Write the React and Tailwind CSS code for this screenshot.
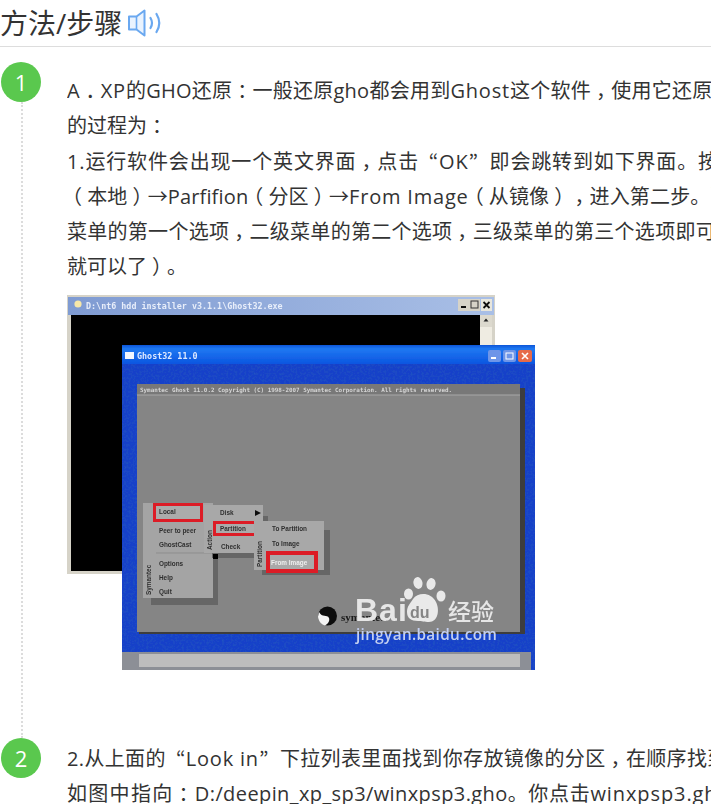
import React from "react";

function Speaker() {
  return (
    <svg width="36" height="28" viewBox="0 0 36 28" className="ml-[5px] mt-[9px] shrink-0" fill="none">
      <path d="M2 7.500h7.500L17.500 1.500v25L9.500 20.500H2z" fill="#eaf3fe" stroke="#6aa8f0" strokeWidth="2" strokeLinejoin="round" />
      <path d="M9.500 7.500v13" stroke="#6aa8f0" strokeWidth="1.600" />
      <path d="M23.500 9c1.800 3 1.800 7 0 10" stroke="#6aa8f0" strokeWidth="2.200" strokeLinecap="round" />
      <path d="M29.500 5c3.400 5.500 3.400 12.500 0 18" stroke="#6aa8f0" strokeWidth="2.200" strokeLinecap="round" />
    </svg>
  );
}

const menu = "font-['Liberation_Sans',sans-serif] text-[6.4px] font-bold fill-[#2f2f2f]";
const mono = "font-['DejaVu_Sans_Mono',monospace] font-bold";

function Shot() {
  return (
    <svg width="468" height="375" viewBox="67 295 468 375" className="block">
      <defs>
        <filter id="soft" x="-5%" y="-5%" width="110%" height="110%"><feGaussianBlur stdDeviation="0.6" /></filter>
        <filter id="softer" x="-5%" y="-5%" width="110%" height="110%"><feGaussianBlur stdDeviation="0.35" /></filter>
        <filter id="grain" x="0" y="0" width="100%" height="100%">
          <feTurbulence type="fractalNoise" baseFrequency="0.45" numOctaves="2" seed="4" result="n" />
          <feColorMatrix in="n" type="matrix" values="0 0 0 0 0.02  0 0 0 0 0.12  0 0 0 0 0.5  0 0 0 1.2 -0.5" />
        </filter>
        <linearGradient id="oldbar" x1="0" x2="1" y1="0" y2="0">
          <stop offset="0" stopColor="#7f9bd2" />
          <stop offset="1" stopColor="#a9bfe6" />
        </linearGradient>
        <linearGradient id="xpbar" x1="0" x2="0" y1="0" y2="1">
          <stop offset="0" stopColor="#0c55d8" />
          <stop offset="0.2" stopColor="#1f78f2" />
          <stop offset="1" stopColor="#0b55e0" />
        </linearGradient>
      </defs>
      <g filter="url(#soft)">
        {/* back window */}
        <rect x="67" y="295" width="428" height="279" fill="#d6d3c8" />
        <rect x="68" y="297" width="426" height="18" fill="url(#oldbar)" />
        <text x="86" y="309" className={`${mono} text-[8.4px] fill-[#e8eefa]`}>D:\nt6 hdd installer v3.1.1\Ghost32.exe</text>
        <circle cx="78" cy="304" r="3.6" fill="#f6e7a8" />
        <rect x="458" y="299" width="11" height="12" fill="#d6d3c8" />
        <rect x="461" y="306" width="5" height="2" fill="#111" />
        <rect x="469" y="299" width="11" height="12" fill="#d6d3c8" />
        <rect x="471" y="301" width="7" height="7" fill="none" stroke="#333" />
        <rect x="481" y="299" width="11" height="12" fill="#e8e6dc" />
        <path d="M483.500 302l6 6M489.500 302l-6 6" stroke="#111" strokeWidth="1.800" />
        <rect x="71" y="315" width="409" height="256" fill="#000" />
        <rect x="480" y="315" width="12" height="256" fill="#efece2" />
        <rect x="480" y="315" width="12" height="12" fill="#dcd9ce" />
        <path d="M486 318.500l-2.500 3h5z" fill="#222" />
        {/* front window */}
        <rect x="122" y="345" width="413" height="325" fill="#1740c9" />
        <rect x="122" y="364" width="413" height="306" filter="url(#grain)" />
        <rect x="122" y="345" width="413" height="19" fill="url(#xpbar)" />
        <rect x="125" y="352" width="9" height="7" fill="#f2f6ff" />
        <text x="137" y="359" className={`${mono} text-[8.4px] fill-[#dce8ff]`}>Ghost32 11.0</text>
        <rect x="488" y="350" width="13" height="12" rx="2" fill="#6e95e8" />
        <rect x="491" y="357" width="5" height="2" fill="#fff" />
        <rect x="503" y="350" width="13" height="12" rx="2" fill="#6e95e8" />
        <rect x="506" y="353" width="7" height="6" fill="none" stroke="#fff" />
        <rect x="518" y="350" width="14" height="12" rx="2" fill="#e66a48" />
        <path d="M522 353l6 6M528 353l-6 6" stroke="#fff" strokeWidth="1.600" />
        {/* ghost panel */}
        <rect x="139" y="388" width="386" height="246" fill="#3c3c3c" />
        <rect x="137" y="384" width="383" height="248" fill="#858585" />
        <rect x="137" y="384" width="383" height="11" fill="#787878" />
        <path d="M137 395h383" stroke="#a8a8a8" />
        <text x="140" y="392" className={`${mono} text-[5.9px] fill-[#d5d5d5]`}>Symantec Ghost 11.0.2   Copyright (C) 1998-2007 Symantec Corporation. All rights reserved.</text>
        {/* bottom status */}
        <rect x="122" y="652" width="409" height="18" fill="#8c8f96" />
        <rect x="139" y="654" width="381" height="13" fill="#bdbdbd" />
        {/* menu 1 */}
        <rect x="151" y="512" width="67" height="93" fill="#666" />
        <rect x="143" y="503" width="70" height="95" fill="#a4a4a4" />
        <rect x="153" y="503" width="50" height="19" fill="#dc1f28" />
        <rect x="156" y="506" width="44" height="13" fill="#ababab" />
        <text x="159" y="514" className={menu}>Local</text>
        <text x="159" y="533" className={menu}>Peer to peer</text>
        <text x="159" y="547" className={menu}>GhostCast</text>
        <path d="M156 553h56" stroke="#8d8d8d" />
        <text x="159" y="566" className={menu}>Options</text>
        <text x="159" y="580" className={menu}>Help</text>
        <text x="159" y="594" className={menu}>Quit</text>
        <text transform="translate(151 595) rotate(-90)" className={menu}>Symantec</text>
        {/* menu 2 */}
        <rect x="212" y="516" width="56" height="42" fill="#666" />
        <rect x="204" y="505" width="59" height="48" fill="#a8a8a8" />
        <rect x="213" y="521" width="44" height="15" fill="#dc1f28" />
        <rect x="216" y="524" width="38" height="9" fill="#ababab" />
        <text x="220" y="515" className={menu}>Disk</text>
        <path d="M255 510l6 3-6 3z" fill="#111" />
        <text x="220" y="531" className={menu}>Partition</text>
        <text x="221" y="549" className={menu}>Check</text>
        <text transform="translate(212 550) rotate(-90)" className={menu}>Action</text>
        <rect x="213" y="554" width="5" height="5" fill="#000" />
        {/* menu 3 */}
        <rect x="262" y="530" width="68" height="45" fill="#666" />
        <rect x="254" y="521" width="70" height="49" fill="#a8a8a8" />
        <rect x="266" y="551" width="52" height="22" fill="#dc1f28" />
        <rect x="270" y="555" width="44" height="14" fill="#a9a9a9" />
        <text x="272" y="531" className={menu}>To Partition</text>
        <text x="272" y="546" className={menu}>To Image</text>
        <text x="271" y="565" className="font-['Liberation_Sans',sans-serif] text-[6.4px] font-bold fill-[#eeeeee]">From Image</text>
        <text transform="translate(262 567) rotate(-90)" className={menu}>Partition</text>
        {/* symantec logo */}
        <circle cx="327.500" cy="616" r="9.500" fill="#111" />
        <path d="M319 612c3 6 8 2 10 6 1 3-1 6-4 7.500-4-1-7-5-7-9z" fill="#f4f4f4" />
        <text x="341" y="621" className="font-['Liberation_Serif',serif] text-[11px] font-bold fill-[#1a1a1a]">symantec.</text>
      </g>
      {/* watermark */}
      <g filter="url(#softer)">
        <text x="355" y="621" className="font-['Liberation_Sans',sans-serif] text-[32px] font-bold fill-[#e6e6e6] tracking-[1px]">Bai</text>
        <g fill="#e9e9e9">
          <ellipse cx="418" cy="583" rx="4.500" ry="6" transform="rotate(-12 418 583)" />
          <ellipse cx="431" cy="584" rx="4.500" ry="6" transform="rotate(12 431 584)" />
          <ellipse cx="408.500" cy="594" rx="4.500" ry="5.500" />
          <ellipse cx="441" cy="596" rx="4.500" ry="5.500" />
          <path d="M413 599c5-7 18-7 23 3 4 8 2 20-7 20-5 0-7-1-11-1-7 0-11-3-11-9 0-6 3-8 6-13z" />
        </g>
        <text x="410" y="618" className="font-['Liberation_Sans',sans-serif] text-[16px] font-bold fill-[#858585]">du</text>
        <text x="448" y="620" className="font-['Noto_Sans_CJK_SC',sans-serif] text-[23px] font-medium fill-[#e6e6e6]">经验</text>
        <text x="356" y="640" className="font-['Open_Sans',sans-serif] text-[15.3px] font-semibold fill-[#c3cff0] tracking-[0.35px]">jingyan.baidu.com</text>
      </g>
    </svg>
  );
}

function T({ s }) {
  return s.split(/([，：）（“”．]|\{[^}]*\})/).map((part, i) => {
    if (part === "，" || part === "：" || part === "）" || part === "．")
      return <span key={i} className="inline-block ml-[5px] -mr-[5px]">{part}</span>;
    if (part === "（")
      return <span key={i} className="inline-block -ml-[5px] mr-[5px]">{part}</span>;
    if (part === "“")
      return <span key={i} className="inline-block w-[20px] text-right font-['Noto_Sans_CJK_JP',sans-serif]">{part}</span>;
    if (part === "”")
      return <span key={i} className="inline-block w-[21px] text-left font-['Noto_Sans_CJK_JP',sans-serif]">{part}</span>;
    if (part.startsWith("{"))
      return <span key={i} className="tracking-[0.8px]">{part.slice(1, -1)}</span>;
    return part;
  });
}

function Line({ children, cls = "" }) {
  return <p className={`whitespace-nowrap overflow-hidden [text-spacing-trim:space-all] ${cls}`}>{children}</p>;
}

function Step({ n, children, grow, top }) {
  return (
    <div className="flex">
      <div className="w-[67px] shrink-0 flex flex-col pl-[1px]">
        <div className="w-10 h-10 shrink-0 rounded-full bg-[#5ac84e] text-white flex items-center justify-center text-[22px]">{n}</div>
        {grow && <div className="flex-1 ml-[20px] border-l-2 border-dotted border-[#dcdcdc]" />}
      </div>
      <div className={`flex-1 min-w-0 text-[20px] leading-[35px] text-[#333] ${top}`}>{children}</div>
    </div>
  );
}

export default function App() {
  return (
    <div className="w-[711px] h-[804px] overflow-hidden bg-white font-['Open_Sans','Noto_Sans_CJK_SC',sans-serif]">
      <div className="h-[47px] border-b border-[#dddddd] flex items-start">
        <h2 className="text-[28px] leading-[46px] text-[#333] font-normal whitespace-nowrap">方法/步骤</h2>
        <Speaker />
      </div>
      <div className="pt-[15px]">
        <Step n="1" grow top="pt-[11px]">
          <Line cls="tracking-[0.25px]"><T s="{A}．{XP}的GHO还原：一般还原gho都会用到{Ghost}这个软件，使用它还原系统" /></Line>
          <Line><T s="的过程为：" /></Line>
          <Line cls="tracking-[0.85px]"><T s="1.运行软件会出现一个英文界面，点击“OK”即会跳转到如下界面。按" /></Line>
          <Line cls="tracking-[0.15px]"><T s="（本地）→Parfifion（分区）→{From Image}（从镜像），进入第二步。配" /></Line>
          <Line cls="tracking-[0.28px]"><T s="菜单的第一个选项，二级菜单的第二个选项，三级菜单的第三个选项即可" /></Line>
          <Line><T s="就可以了）。" /></Line>
          <div className="mt-[11px] pb-[68px]"><Shot /></div>
        </Step>
        <Step n="2" top="pt-[2px]">
          <Line cls="tracking-[0.35px]"><T s="2.从上面的“{Look in}”下拉列表里面找到你存放镜像的分区，在顺序找到" /></Line>
          <Line>
            <span className="tracking-[1.3px]"><T s="如图中指向：" /></span>
            <span className="tracking-[0.4px]">D:/deepin_xp_sp3/winxpsp3.gho</span>
            <span className="tracking-[0.7px]">。你点击</span>
            <span className="tracking-[0.9px]">winxpsp3.gho</span>
          </Line>
        </Step>
      </div>
    </div>
  );
}
